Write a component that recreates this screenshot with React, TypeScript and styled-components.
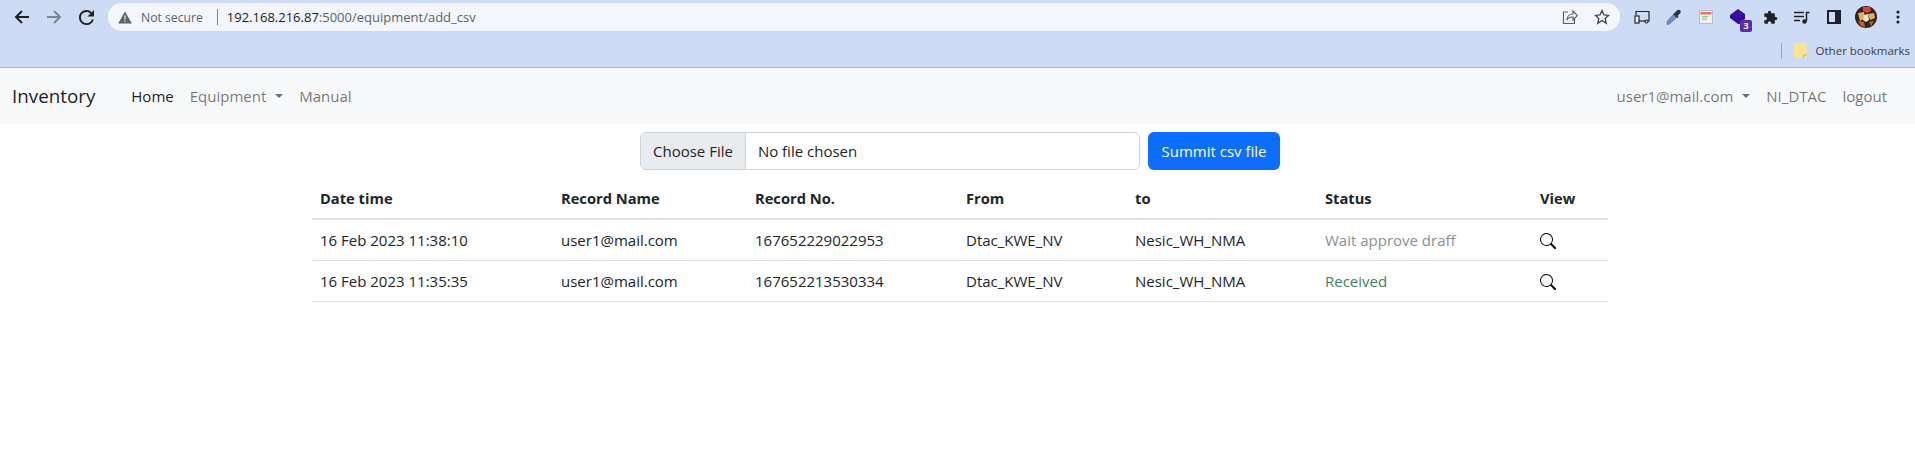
import styled, { createGlobalStyle } from 'styled-components';

const GlobalStyle = createGlobalStyle`
  html, body {
    margin: 0;
    padding: 0;
    background: #fff;
  }
  body {
    font-family: "Open Sans", "Noto Sans", "Liberation Sans", sans-serif;
    font-size: 15px;
    color: #212529;
  }
`;

const Page = styled.div`
  width: 1915px;
  height: 454px;
  overflow: hidden;
`;

/* browser chrome */
const BrowserBar = styled.div`
  height: 67px;
  background: #cddcf4;
  border-bottom: 1px solid #a9b6cf;
`;

const TopRow = styled.div`
  height: 34px;
  display: flex;
  align-items: center;
  padding-left: 6px;
`;

const NavIcon = styled.div`
  width: 32px;
  height: 32px;
  display: flex;
  align-items: center;
  justify-content: center;
`;

const Omnibox = styled.div`
  width: 1512px;
  height: 28px;
  margin-left: 6px;
  margin-right: 6px;
  border-radius: 14px;
  background: #f3f6fc;
  display: flex;
  align-items: center;
  padding-left: 10px;
  box-sizing: border-box;
  font-size: 13px;
`;

const NotSecure = styled.span`
  color: #5f6368;
  font-size: 12.2px;
  margin-left: 9px;
`;

const UrlDivider = styled.span`
  width: 1px;
  height: 16px;
  background: #80868b;
  margin: 0 9px 0 14px;
`;

const UrlHost = styled.span`
  color: #202124;
`;

const UrlPath = styled.span`
  color: #5f6368;
`;

const OmniActions = styled.div`
  margin-left: auto;
  display: flex;
  align-items: center;
  gap: 16px;
  padding-right: 10px;
`;

const ToolIcon = styled.div`
  width: 32px;
  height: 32px;
  display: flex;
  align-items: center;
  justify-content: center;
  position: relative;
`;

const CountBadge = styled.span`
  position: absolute;
  right: 2px;
  bottom: 1px;
  width: 12px;
  height: 12px;
  border-radius: 2px;
  background: #5a2ca8;
  color: #fff;
  font-size: 9px;
  font-weight: 700;
  line-height: 12px;
  text-align: center;
`;

const BookmarkRow = styled.div`
  height: 33px;
  display: flex;
  align-items: center;
  justify-content: flex-end;
  padding-right: 5px;
  font-size: 11.5px;
  color: #3c4043;
`;

const BookmarkDivider = styled.span`
  width: 1px;
  height: 16px;
  background: #9aa5b8;
  margin-right: 12px;
`;

const BookmarkLabel = styled.span`
  margin-left: 9px;
`;

/* navbar */
const Navbar = styled.nav`
  height: 56px;
  background: #f8f9fa;
  display: flex;
  align-items: center;
  padding: 0 12px;
`;

const Brand = styled.span`
  font-size: 18.8px;
  color: rgba(0, 0, 0, 0.9);
  margin-right: 36px;
`;

const NavLink = styled.span<{ $active?: boolean }>`
  color: ${(p) => (p.$active ? 'rgba(0,0,0,.9)' : 'rgba(0,0,0,.55)')};
  margin-right: 16px;
  display: inline-flex;
  align-items: center;
`;

const Caret = styled.span`
  margin-left: 9px;
  width: 0;
  height: 0;
  border-top: 4.5px solid currentColor;
  border-left: 4.5px solid transparent;
  border-right: 4.5px solid transparent;
`;

const NavRight = styled.div`
  margin-left: auto;
  display: flex;
  align-items: center;
`;

/* upload form */
const UploadForm = styled.form`
  display: flex;
  justify-content: center;
  gap: 8px;
  margin-top: 8px;
  margin-left: 5px;
`;

const FileField = styled.div`
  width: 500px;
  height: 38px;
  box-sizing: border-box;
  border: 1px solid #ced4da;
  border-radius: 6px;
  display: flex;
  align-items: center;
  overflow: hidden;
`;

const FileButton = styled.span`
  height: 100%;
  display: flex;
  align-items: center;
  padding: 0 12px;
  background: #e9ecef;
  border-right: 1px solid #ced4da;
`;

const FileName = styled.span`
  padding-left: 12px;
`;

const SubmitButton = styled.button`
  height: 38px;
  width: 132px;
  border: 0;
  border-radius: 6px;
  background: #0d6efd;
  color: #fff;
  font: inherit;
  padding: 0;
`;

/* records table */
const TableWrap = styled.div`
  width: 1296px;
  margin: 9px 0 0 312px;
`;

const Table = styled.table`
  width: 100%;
  table-layout: fixed;
  border-collapse: collapse;
`;

const Th = styled.th<{ $width: number }>`
  width: ${(p) => p.$width}px;
  height: 40px;
  padding: 0 8px 2px;
  text-align: left;
  font-size: 14.7px;
  font-weight: 700;
  border-bottom: 2px solid #dee2e6;
  box-sizing: border-box;
`;

const Td = styled.td`
  height: 41px;
  padding: 0 8px;
  border-bottom: 1px solid #dee2e6;
  box-sizing: border-box;
`;

const Status = styled.span<{ $tone: string }>`
  color: ${(p) => p.$tone};
`;

const SearchIcon = styled.svg`
  display: block;
  margin-top: 2px;
`;

const columns = [
  { label: 'Date time', width: 241 },
  { label: 'Record Name', width: 194 },
  { label: 'Record No.', width: 211 },
  { label: 'From', width: 169 },
  { label: 'to', width: 190 },
  { label: 'Status', width: 215 },
  { label: 'View', width: 76 },
];

const rows = [
  {
    date: '16 Feb 2023 11:38:10',
    no: '167652229022953',
    status: 'Wait approve draff',
    tone: '#8a8f94',
  },
  {
    date: '16 Feb 2023 11:35:35',
    no: '167652213530334',
    status: 'Received',
    tone: '#3f8263',
  },
];

function App() {
  return (
    <Page>
      <GlobalStyle />
      <BrowserBar>
        <TopRow>
          <NavIcon>
            <svg width="16" height="16" viewBox="0 0 16 16" fill="none" stroke="#202124" strokeWidth="2">
              <path d="M15 8H2M8 2 2 8l6 6" />
            </svg>
          </NavIcon>
          <NavIcon>
            <svg width="16" height="16" viewBox="0 0 16 16" fill="none" stroke="#7b8594" strokeWidth="2">
              <path d="M1 8h13M8 2l6 6-6 6" />
            </svg>
          </NavIcon>
          <NavIcon>
            <svg width="15" height="15" viewBox="0 0 16 16" fill="#202124">
              <path d="M13.65 2.35A7.960 7.960 0 0 0 8 0C3.580 0 0 3.580 0 8s3.580 8 8 8c3.730 0 6.840-2.550 7.730-6h-2.080A5.990 5.990 0 0 1 8 14 6 6 0 1 1 8 2c1.660 0 3.140.690 4.220 1.780L9 7h7V0z" />
            </svg>
          </NavIcon>
          <Omnibox>
            <svg width="14" height="13" viewBox="0 0 14 13">
              <path d="M7 0.500 13.800 12.500H0.200z" fill="#5f6368" />
              <path d="M6.400 4.500h1.200v4H6.400zM6.400 9.500h1.200v1.300H6.400z" fill="#f3f6fc" />
            </svg>
            <NotSecure>Not secure</NotSecure>
            <UrlDivider />
            <UrlHost>192.168.216.87</UrlHost>
            <UrlPath>:5000/equipment/add_csv</UrlPath>
            <OmniActions>
              <svg width="16" height="16" viewBox="0 0 16 16" fill="none" stroke="#5f6368" strokeWidth="1.200">
                <path d="M6 3H1.500v11.500h11V10" />
                <path d="M5 11c0-4 3-6 6-6V2l4.500 4.500L11 11V8c-3 0-5 1-6 3z" />
              </svg>
              <svg width="16" height="16" viewBox="0 0 16 16" fill="none" stroke="#3c4043" strokeWidth="1.300">
                <path d="M8 1.500l2 4.400 4.700.500-3.500 3.200 1 4.700L8 11.500l-4.200 2.800 1-4.700L1.300 6.400 6 5.900z" />
              </svg>
            </OmniActions>
          </Omnibox>
          <ToolIcon>
            <svg width="16" height="14" viewBox="0 0 16 14" fill="none" stroke="#202124" strokeWidth="1.200">
              <path d="M2 5V1.500h13V11h-2" />
              <rect x="1" y="6" width="4" height="7" fill="#fff" />
              <path d="M5 11h6" />
              <circle cx="12.500" cy="11.500" r="1.500" fill="#fff" />
            </svg>
          </ToolIcon>
          <ToolIcon>
            <svg width="16" height="16" viewBox="0 0 16 16">
              <path d="M1 15.500 1.500 12 7.500 5.500l3 3-6.500 6z" fill="#6f8fd8" stroke="#5b6a86" strokeWidth="0.800" />
              <path d="M8 4.500 11 1.500c1-1 2.500-1 3.200-.2s.8 2.200-.2 3.200l-2.500 2.500 1 1-1.200 1.200-4.500-4.500z" fill="#2d3440" />
            </svg>
          </ToolIcon>
          <ToolIcon>
            <svg width="14" height="14" viewBox="0 0 14 14">
              <rect x="0.500" y="0.500" width="13" height="13" fill="#f4f1ea" stroke="#b9bdc4" />
              <rect x="1.500" y="2" width="11" height="2.500" fill="#e57368" />
              <rect x="3" y="6" width="6" height="1.300" fill="#8ccf8f" />
              <rect x="3" y="8.500" width="5" height="1.300" fill="#8ccf8f" />
            </svg>
          </ToolIcon>
          <ToolIcon>
            <svg width="18" height="18" viewBox="0 0 18 18">
              <path d="M9 1 16 6v5l-5 5-2 0L1 10V7z" fill="#3b0ea3" />
              <path d="M1 8 9 13l7-5" fill="none" stroke="#1f0a6e" strokeWidth="0.800" />
            </svg>
            <CountBadge>3</CountBadge>
          </ToolIcon>
          <ToolIcon>
            <svg width="15" height="15" viewBox="0 0 24 24" fill="#202124">
              <path d="M20.500 11H19V7c0-1.100-.900-2-2-2h-4V3.500a2.500 2.500 0 0 0-5 0V5H4c-1.100 0-2 .900-2 2v3.800h1.500c1.500 0 2.700 1.200 2.700 2.700S5 16.200 3.500 16.200H2V20c0 1.100.900 2 2 2h3.800v-1.500c0-1.500 1.200-2.700 2.700-2.700s2.700 1.200 2.700 2.700V22H17c1.100 0 2-.900 2-2v-4h1.500a2.500 2.500 0 0 0 0-5z" />
            </svg>
          </ToolIcon>
          <ToolIcon>
            <svg width="16" height="13" viewBox="0 0 16 13" fill="none" stroke="#202124" strokeWidth="1.500">
              <path d="M0 1.500h10M0 5.500h10M0 9.500h6M12.500 10V1.500h3" />
              <circle cx="10.500" cy="10.500" r="2.200" fill="#202124" stroke="none" />
            </svg>
          </ToolIcon>
          <ToolIcon>
            <svg width="14" height="14" viewBox="0 0 14 14">
              <path d="M0 0h14v14H0z" fill="#202124" />
              <path d="M2 2h6v10H2z" fill="#cddcf4" />
            </svg>
          </ToolIcon>
          <ToolIcon>
            <svg width="22" height="22" viewBox="0 0 22 22">
              <circle cx="11" cy="11" r="11" fill="#33241c" />
              <path d="M8 1h7l1 4-4 2-4-2z" fill="#d9482a" />
              <path d="M3 7l6-1 1 6-5 3zM13 8l6-1 1 5-5 2z" fill="#e6b063" />
              <path d="M9 9l4-1 1 6-3 2-3-2z" fill="#f4e3c2" />
              <path d="M3 15l6 1 1 5-4-1zM14 16l5-1-3 5z" fill="#c8622c" />
            </svg>
          </ToolIcon>
          <ToolIcon>
            <svg width="4" height="14" viewBox="0 0 4 14" fill="#202124">
              <circle cx="2" cy="2" r="1.600" />
              <circle cx="2" cy="7" r="1.600" />
              <circle cx="2" cy="12" r="1.600" />
            </svg>
          </ToolIcon>
        </TopRow>
        <BookmarkRow>
          <BookmarkDivider />
          <svg width="13" height="15" viewBox="0 0 13 15">
            <path d="M0 1.500Q0 0 1.500 0H12.500V15H1.500Q0 15 0 13.500z" fill="#fde293" />
            <path d="M9.500 15v-3H13" fill="none" stroke="#e7b93f" />
          </svg>
          <BookmarkLabel>Other bookmarks</BookmarkLabel>
        </BookmarkRow>
      </BrowserBar>

      <Navbar>
        <Brand>Inventory</Brand>
        <NavLink $active>Home</NavLink>
        <NavLink>
          Equipment
          <Caret />
        </NavLink>
        <NavLink>Manual</NavLink>
        <NavRight>
          <NavLink>
            user1@mail.com
            <Caret />
          </NavLink>
          <NavLink>NI_DTAC</NavLink>
          <NavLink>logout</NavLink>
        </NavRight>
      </Navbar>

      <UploadForm>
        <FileField>
          <FileButton>Choose File</FileButton>
          <FileName>No file chosen</FileName>
        </FileField>
        <SubmitButton type="button">Summit csv file</SubmitButton>
      </UploadForm>

      <TableWrap>
        <Table>
          <thead>
            <tr>
              {columns.map((col) => (
                <Th key={col.label} $width={col.width}>
                  {col.label}
                </Th>
              ))}
            </tr>
          </thead>
          <tbody>
            {rows.map((row) => (
              <tr key={row.no}>
                <Td>{row.date}</Td>
                <Td>user1@mail.com</Td>
                <Td>{row.no}</Td>
                <Td>Dtac_KWE_NV</Td>
                <Td>Nesic_WH_NMA</Td>
                <Td>
                  <Status $tone={row.tone}>{row.status}</Status>
                </Td>
                <Td>
                  <SearchIcon width="16" height="16" viewBox="0 0 16 16" fill="#000">
                    <path d="M11.742 10.344a6.500 6.500 0 1 0-1.397 1.398h-.001c.03.04.062.078.098.115l3.850 3.850a1 1 0 0 0 1.415-1.414l-3.850-3.850a1.007 1.007 0 0 0-.115-.1zM12 6.500a5.500 5.500 0 1 1-11 0 5.500 5.500 0 0 1 11 0z" />
                  </SearchIcon>
                </Td>
              </tr>
            ))}
          </tbody>
        </Table>
      </TableWrap>
    </Page>
  );
}

export default App;
